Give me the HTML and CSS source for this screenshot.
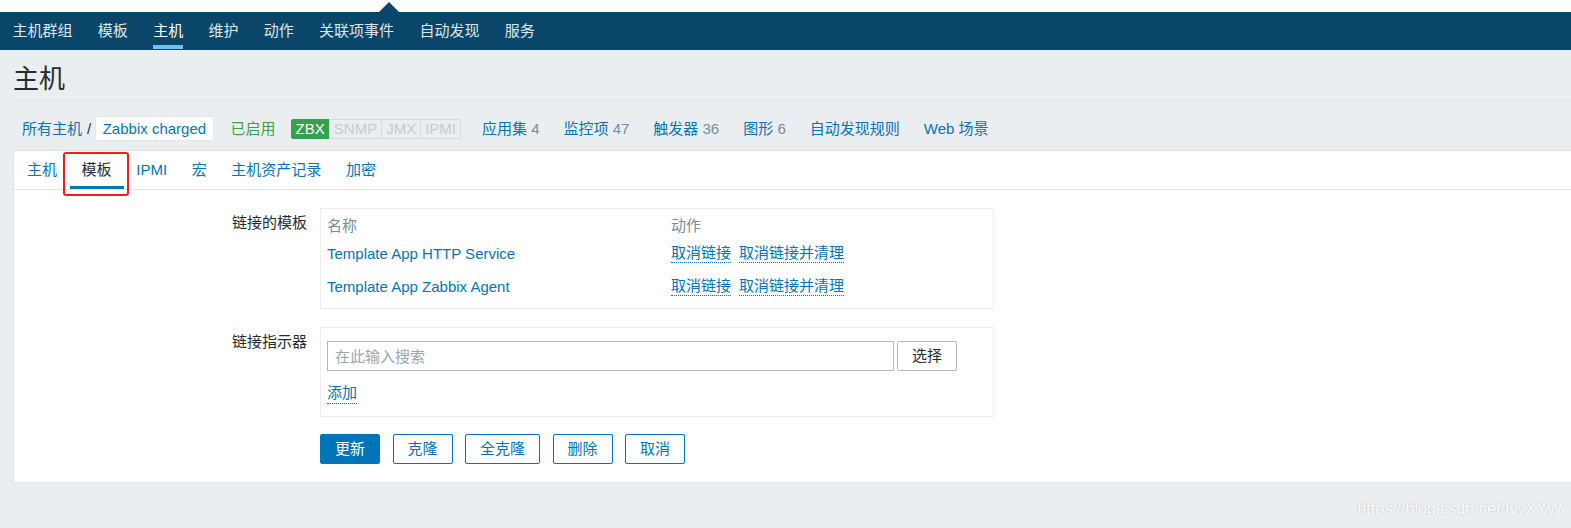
FILE: index.html
```html
<!DOCTYPE html>
<html lang="zh-CN">
<head>
<meta charset="utf-8">
<title>主机</title>
<link rel="stylesheet" href="styles.css">
</head>
<body>
<div class="top-strip"><span class="top-caret"></span></div>
<nav class="main-nav">
  <a class="nav-item">主机群组</a>
  <a class="nav-item">模板</a>
  <a class="nav-item is-active">主机</a>
  <a class="nav-item">维护</a>
  <a class="nav-item">动作</a>
  <a class="nav-item">关联项事件</a>
  <a class="nav-item">自动发现</a>
  <a class="nav-item">服务</a>
</nav>
<main class="page">
  <header class="page-header"><h1 class="page-title">主机</h1></header>
  <div class="host-bar">
    <a class="crumb">所有主机</a>
    <span class="crumb-sep">/</span>
    <a class="crumb crumb-current">Zabbix charged</a>
    <span class="status-on">已启用</span>
    <span class="avail">
      <span class="avail-item is-on">ZBX</span>
      <span class="avail-item">SNMP</span>
      <span class="avail-item">JMX</span>
      <span class="avail-item">IPMI</span>
    </span>
    <a class="host-link first">应用集 <span class="count">4</span></a>
    <a class="host-link">监控项 <span class="count">47</span></a>
    <a class="host-link">触发器 <span class="count">36</span></a>
    <a class="host-link">图形 <span class="count">6</span></a>
    <a class="host-link">自动发现规则</a>
    <a class="host-link">Web 场景</a>
  </div>
  <section class="panel">
    <div class="tabs">
      <a class="tab">主机</a>
      <a class="tab is-active">模板<span class="highlight"></span></a>
      <a class="tab">IPMI</a>
      <a class="tab">宏</a>
      <a class="tab">主机资产记录</a>
      <a class="tab">加密</a>
    </div>
    <div class="form">
      <div class="form-label">链接的模板</div>
      <div class="form-box box-linked">
        <table class="linked">
          <thead>
            <tr><th class="col-name">名称</th><th>动作</th></tr>
          </thead>
          <tbody>
            <tr><td><a>Template App HTTP Service</a></td><td><a class="dotted-link">取消链接</a><a class="dotted-link">取消链接并清理</a></td></tr>
            <tr><td><a>Template App Zabbix Agent</a></td><td><a class="dotted-link">取消链接</a><a class="dotted-link">取消链接并清理</a></td></tr>
          </tbody>
        </table>
      </div>
      <div class="form-label">链接指示器</div>
      <div class="form-box box-link">
        <div class="search-row">
          <input class="search" type="text" placeholder="在此输入搜索">
          <button class="btn-grey" type="button">选择</button>
        </div>
        <div class="add-row"><a class="dotted-link">添加</a></div>
      </div>
      <div></div>
      <div class="actions">
        <button class="btn btn-main" type="button">更新</button>
        <button class="btn" type="button">克隆</button>
        <button class="btn" type="button">全克隆</button>
        <button class="btn" type="button">删除</button>
        <button class="btn" type="button">取消</button>
      </div>
    </div>
  </section>
  <div class="watermark">https://blog.csdn.net/IvyXYW</div>
</main>
</body>
</html>
```

FILE: styles.css
```css
* { box-sizing: border-box; }
html { background: #ebeef0; }
body {
  margin: 0;
  font-family: "Liberation Sans", Arial, "Noto Sans CJK SC", sans-serif;
  font-size: 15px;
  line-height: 18px;
  color: #1f2c33;
}
a { color: #0275b8; text-decoration: none; }

.top-strip { position: relative; height: 12px; background: #fff; }
.top-caret {
  position: absolute; left: 379px; top: 2px; width: 0; height: 0;
  border-left: 10px solid transparent; border-right: 10px solid transparent;
  border-bottom: 10px solid #0a466a;
}

.main-nav { display: flex; gap: 25.3px; height: 38px; padding-left: 12.5px; background: #0a466a; }
.nav-item { position: relative; color: #dde6ec; line-height: 38px; }
.nav-item.is-active { color: #fff; }
.nav-item.is-active::after {
  content: ""; position: absolute; left: 0; right: 0; bottom: 1px; height: 4px; background: #72c0f0;
}

.page { position: relative; min-height: 478px; padding-left: 13px; }
.page-header { height: 51px; border-bottom: 1px solid #dfe4e7; }
.page-title { margin: 0; padding-top: 7px; font-size: 26px; font-weight: normal; line-height: 44px; color: #1f2c33; }

.host-bar { display: flex; align-items: center; height: 49px; padding: 6px 0 0 9px; white-space: nowrap; }
.crumb-sep { margin: 0 4px 0 5px; color: #1f2c33; }
.crumb-current { height: 25px; line-height: 23px; padding: 0 6.5px; background: #fff; border: 1px solid #e3e7ea; border-radius: 2px; }
.status-on { margin-left: 17px; color: #429e47; }
.avail { display: flex; margin-left: 15px; }
.avail-item {
  height: 20px; line-height: 18px; padding: 0 4px; border: 1px solid #d5dce0;
  color: #c3cbd0; background: #ebeef0; margin-left: -1px;
}
.avail-item:first-child { margin-left: 0; border-radius: 2px 0 0 2px; }
.avail-item:last-child { border-radius: 0 2px 2px 0; }
.avail-item.is-on { background: #34a150; border-color: #34a150; color: #fff; }
.host-link { margin-left: 24px; }
.host-link.first { margin-left: 21px; }
.count { color: #768d99; }

.panel { background: #fff; border: 1px solid #dfe4e7; border-right: 0; }
.tabs { display: flex; gap: 0.6px; height: 39px; padding-left: 1px; border-bottom: 1px solid #dfe4e7; }
.tab { position: relative; padding: 0 12px; line-height: 38px; }
.tab.is-active { color: #1f2c33; }
.tab.is-active::after { content: ""; position: absolute; left: 0; right: 0; bottom: 0; height: 3px; background: #0275b8; }
.highlight {
  position: absolute; left: -7px; top: 1px; width: 66px; height: 44px;
  border: 2px solid #f01d1d; border-radius: 3px;
}

.form {
  display: grid; grid-template-columns: 293px 674px; column-gap: 13px; row-gap: 18px;
  padding: 18px 0 18px;
}
.form-label { text-align: right; padding-top: 6px; line-height: 18px; }
.form-box { border: 1px solid #ebeef0; }
.box-linked { padding: 6px 6px 5px; }
.linked { width: 100%; border-collapse: collapse; }
.linked th { height: 22px; padding: 0; text-align: left; font-weight: normal; color: #768d99; vertical-align: middle; }
.linked td { height: 33px; padding: 0; vertical-align: middle; }
.col-name { width: 344px; }
.dotted-link { display: inline-block; line-height: 18px; border-bottom: 1px dotted #0275b8; }
.dotted-link + .dotted-link { margin-left: 8px; }

.box-link { padding: 13px 6px 12px; }
.search-row { display: flex; gap: 3px; }
.search {
  width: 567px; height: 30px; margin: 0; padding: 0 7px; border: 1px solid #acbbc2; border-radius: 0;
  font: inherit; color: #1f2c33; background: #fff; outline: none;
}
.search::placeholder { color: #9aa7b0; }
.btn-grey {
  width: 60px; height: 30px; margin: 0; padding: 0; border: 1px solid #acbbc2; border-radius: 2px;
  background: #fff; color: #1f2c33; font: inherit;
}
.add-row { margin-top: 12px; line-height: 20px; }
.add-row .dotted-link { line-height: 20px; }

.actions { display: flex; gap: 12.5px; margin-top: -1px; }
.btn {
  height: 30px; margin: 0; padding: 0 14px; border: 1px solid #0275b8; border-radius: 2px;
  background: #fff; color: #0275b8; font: inherit; line-height: 28px;
}
.btn-main { background: #0275b8; color: #fff; }

.watermark {
  position: absolute; right: 9px; bottom: 10px; font-size: 16px; line-height: 18px;
  color: rgba(255, 255, 255, 0.95); text-shadow: 0 0 2px rgba(0, 0, 0, 0.2);
}
```
